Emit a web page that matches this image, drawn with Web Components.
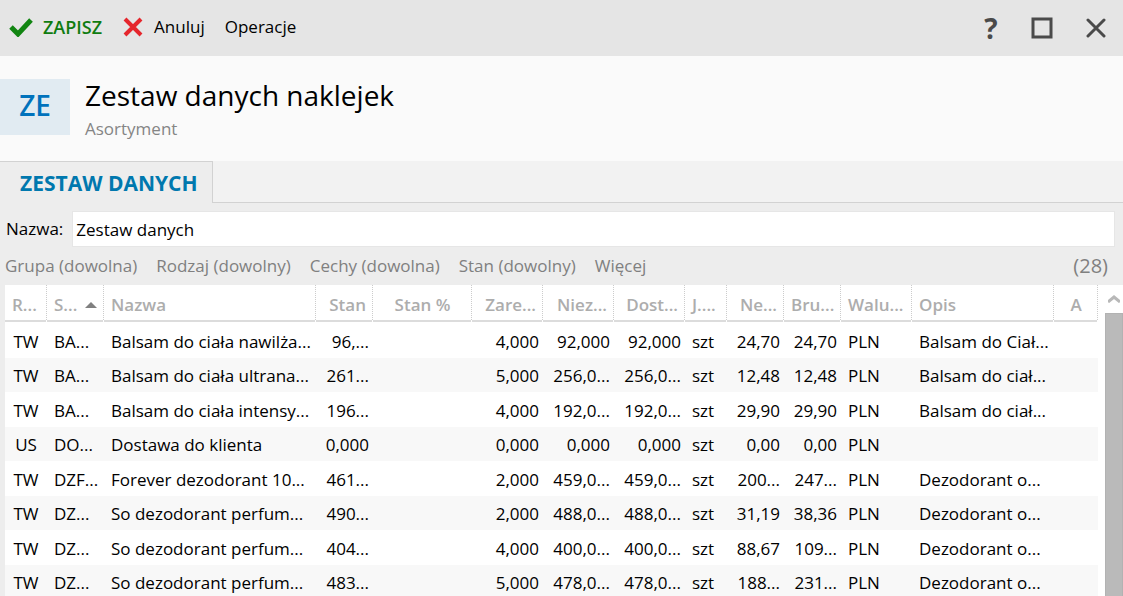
<!DOCTYPE html>
<html lang="pl">
<head>
<meta charset="utf-8">
<title>Zestaw danych naklejek</title>
<style>
    body {
        margin: 0;
        font: 17px/24px "Open Sans", "Noto Sans", sans-serif;
        color: #000;
        background: #ededed;
        overflow: hidden;
    }
</style>
</head>
<body>
<label-set-window>
    <tool-bar></tool-bar>
    <record-header initials="ZE">
        Zestaw danych naklejek
        <span slot="kind">Asortyment</span>
    </record-header>
    <tab-strip>Zestaw danych</tab-strip>
    <name-field value="Zestaw danych">Nazwa:</name-field>
    <filter-bar count="28"></filter-bar>
    <product-grid></product-grid>
</label-set-window>

<script>
class LabelSetWindow extends HTMLElement {
    constructor() {
        super();
        this.attachShadow({ mode: "open" }).innerHTML = `
            <style>
                :host {
                    display: flex;
                    flex-direction: column;
                    height: 100vh;
                    overflow: hidden;
                }
            </style>
            <slot></slot>
        `;
    }
}

class ToolBar extends HTMLElement {
    constructor() {
        super();
        this.attachShadow({ mode: "open" }).innerHTML = `
            <style>
                :host {
                    display: flex;
                    align-items: center;
                    flex: none;
                    height: 56px;
                    padding: 0 17px 0 9px;
                    box-sizing: border-box;
                    background: #e5e5e5;
                }
                button {
                    display: flex;
                    align-items: center;
                    padding: 0;
                    border: 0;
                    background: none;
                    color: inherit;
                    font: inherit;
                }
                svg { display: block; }
                .actions { display: flex; gap: 20px; margin-bottom: 2px; }
                .actions button { gap: 10px; }
                .save { color: #107c10; font-size: 18px; font-weight: 600; }
                .window { display: flex; gap: 33px; margin-left: auto; color: #4a4a4a; }
                .help { width: 14px; justify-content: center; font-size: 28px; font-weight: 700; }
            </style>
            <div class="actions">
                <button class="save">
                    <svg width="24" height="20" viewBox="0 0 24 20"><path d="M2 10l7 7L22 3" fill="none" stroke="#128512" stroke-width="5"/></svg>
                    ZAPISZ
                </button>
                <button>
                    <svg width="22" height="20" viewBox="0 0 22 20"><path d="M3 2l16 16M19 2L3 18" fill="none" stroke="#e5262c" stroke-width="4"/></svg>
                    Anuluj
                </button>
                <button>Operacje</button>
            </div>
            <div class="window">
                <button class="help" aria-label="Pomoc">?</button>
                <button aria-label="Maksymalizuj">
                    <svg width="22" height="22" viewBox="0 0 22 22"><path d="M2 2h18v18H2z" fill="none" stroke="#4a4a4a" stroke-width="3"/></svg>
                </button>
                <button aria-label="Zamknij">
                    <svg width="20" height="20" viewBox="0 0 20 20"><path d="M2 2l16 16M18 2L2 18" fill="none" stroke="#4a4a4a" stroke-width="3" stroke-linecap="round"/></svg>
                </button>
            </div>
        `;
    }
}

class RecordHeader extends HTMLElement {
    constructor() {
        super();
        this.attachShadow({ mode: "open" }).innerHTML = `
            <style>
                :host {
                    display: flex;
                    align-items: flex-start;
                    flex: none;
                    gap: 15px;
                    padding: 23px 0 20px;
                    background: #fafafa;
                }
                .badge {
                    width: 70px;
                    height: 56px;
                    background: #e1ebf2;
                    color: #0072bc;
                    font-size: 28px;
                    font-weight: 600;
                    line-height: 52px;
                    text-align: center;
                }
                h1 { margin: 0; font-size: 28px; line-height: 32px; font-weight: 400; }
                .kind { margin-top: 6px; color: #858585; }
            </style>
            <div class="badge"></div>
            <div>
                <h1><slot></slot></h1>
                <div class="kind"><slot name="kind"></slot></div>
            </div>
        `;
        this.shadowRoot.querySelector(".badge").textContent = this.getAttribute("initials");
    }
}

class TabStrip extends HTMLElement {
    constructor() {
        super();
        this.attachShadow({ mode: "open" }).innerHTML = `
            <style>
                :host {
                    display: flex;
                    flex: none;
                    height: 42px;
                    background: #f2f2f2;
                }
                button {
                    padding: 0 14px 0 20px;
                    border: solid #d2d2d2;
                    border-width: 1px 1px 0 0;
                    background: #ededed;
                    color: #0078ae;
                    font: inherit;
                    font-size: 21px;
                    font-weight: 700;
                    text-transform: uppercase;
                }
                .rest { flex: 1; border-bottom: 1px solid #d2d2d2; }
            </style>
            <button><slot></slot></button>
            <div class="rest"></div>
        `;
    }
}

class NameField extends HTMLElement {
    constructor() {
        super();
        this.attachShadow({ mode: "open" }).innerHTML = `
            <style>
                :host {
                    display: flex;
                    flex: none;
                    align-items: center;
                    gap: 9px;
                    padding: 8px 8px 0 6px;
                }
                input {
                    flex: 1;
                    min-width: 0;
                    height: 36px;
                    box-sizing: border-box;
                    padding: 0 3px;
                    border: 1px solid #e6e6e6;
                    background: white;
                    color: inherit;
                    font: inherit;
                }
            </style>
            <label for="name"><slot></slot></label>
            <input id="name" type="text">
        `;
        this.shadowRoot.querySelector("input").value = this.getAttribute("value");
    }
}

class FilterBar extends HTMLElement {
    constructor() {
        super();
        let filters = ["Grupa (dowolna)", "Rodzaj (dowolny)", "Cechy (dowolna)", "Stan (dowolny)", "Więcej"];
        this.attachShadow({ mode: "open" }).innerHTML = `
            <style>
                :host {
                    display: flex;
                    flex: none;
                    align-items: center;
                    gap: 19px;
                    height: 38px;
                    padding: 0 15px 0 5px;
                    color: #808080;
                }
                button {
                    padding: 0;
                    border: 0;
                    background: none;
                    color: inherit;
                    font: inherit;
                }
                output { margin-left: auto; font-size: 20px; }
            </style>
            ${filters.map(name => `<button>${name}</button>`).join("")}
            <output>(${this.getAttribute("count")})</output>
        `;
    }
}

// [header, width, header alignment, cell alignment]; no width means the column stretches
const COLUMNS = [
    ["R...", 42, "left", "center"],
    ["S...", 57, "left", "left"],
    ["Nazwa", 0, "left", "left"],
    ["Stan", 57, "right", "right"],
    ["Stan %", 99, "center", "right"],
    ["Zare...", 71, "right", "right"],
    ["Niez...", 71, "right", "right"],
    ["Dost...", 71, "right", "right"],
    ["J....", 42, "left", "left"],
    ["Ne...", 57, "right", "right"],
    ["Bru...", 57, "right", "right"],
    ["Walu...", 71, "left", "left"],
    ["Opis", 142, "left", "left"],
    ["A", 44, "center", "left"],
];

const ROWS = [
    ["TW", "BA...", "Balsam do ciała nawilża...", "96,...", "", "4,000", "92,000", "92,000", "szt", "24,70", "24,70", "PLN", "Balsam do Ciał...", ""],
    ["TW", "BA...", "Balsam do ciała ultrana...", "261...", "", "5,000", "256,0...", "256,0...", "szt", "12,48", "12,48", "PLN", "Balsam do ciał...", ""],
    ["TW", "BA...", "Balsam do ciała intensy...", "196...", "", "4,000", "192,0...", "192,0...", "szt", "29,90", "29,90", "PLN", "Balsam do ciał...", ""],
    ["US", "DO...", "Dostawa do klienta", "0,000", "", "0,000", "0,000", "0,000", "szt", "0,00", "0,00", "PLN", "", ""],
    ["TW", "DZF...", "Forever dezodorant 10...", "461...", "", "2,000", "459,0...", "459,0...", "szt", "200...", "247...", "PLN", "Dezodorant o...", ""],
    ["TW", "DZ...", "So dezodorant perfum...", "490...", "", "2,000", "488,0...", "488,0...", "szt", "31,19", "38,36", "PLN", "Dezodorant o...", ""],
    ["TW", "DZ...", "So dezodorant perfum...", "404...", "", "4,000", "400,0...", "400,0...", "szt", "88,67", "109...", "PLN", "Dezodorant o...", ""],
    ["TW", "DZ...", "So dezodorant perfum...", "483...", "", "5,000", "478,0...", "478,0...", "szt", "188...", "231...", "PLN", "Dezodorant o...", ""],
];

class ProductGrid extends HTMLElement {
    constructor() {
        super();
        this.attachShadow({ mode: "open" }).innerHTML = `
            <style>
                :host {
                    display: flex;
                    flex: 1;
                    gap: 7px;
                    min-height: 0;
                    margin-left: 5px;
                    background: white;
                    overflow: hidden;
                }
                .view { flex: 1; min-width: 0; overflow: hidden; }
                table {
                    width: 100%;
                    table-layout: fixed;
                    border-collapse: separate;
                    border-spacing: 0;
                }
                th, td { padding: 0; white-space: nowrap; }
                th {
                    height: 38px;
                    color: #adadad;
                    font-weight: 600;
                }
                th div {
                    height: 35px;
                    padding: 0 6px 0 7px;
                    border-right: 1px dotted #ccc;
                    line-height: 40px;
                }
                th::after {
                    content: "";
                    display: block;
                    height: 2px;
                    margin: 0 1px 1px 0;
                    background: #dcdcdc;
                }
                th svg { margin-left: 3px; vertical-align: 3px; }
                td { height: 34px; padding: 2px 4px 0 7px; box-sizing: border-box; }
                td.center { padding: 2px 0 0; }
                tr:nth-child(odd) td { height: 35px; }
                tr:nth-child(even) td { background: #f8f8f8; }
                .left { text-align: left; }
                .center { text-align: center; }
                .right { text-align: right; }
            </style>
            <div class="view">
                <table>
                    <colgroup>${COLUMNS.map(c => c[1] ? `<col style="width: ${c[1]}px">` : "<col>").join("")}</colgroup>
                    <thead><tr>${COLUMNS.map((c, i) => this.headerCell(c, i)).join("")}</tr></thead>
                    <tbody>${ROWS.map(row => this.row(row)).join("")}</tbody>
                </table>
            </div>
            <grid-scroll></grid-scroll>
        `;
    }

    headerCell([title, width, align], index) {
        let arrow = index == 1 ? ` <svg width="12" height="6" viewBox="0 0 12 6"><path d="M0 6l6-6 6 6z" fill="#808080"/></svg>` : "";
        return `<th class="${align}"><div>${title}${arrow}</div></th>`;
    }

    row(cells) {
        return `<tr>${cells.map((text, i) => `<td class="${COLUMNS[i][3]}">${text}</td>`).join("")}</tr>`;
    }
}

class GridScroll extends HTMLElement {
    constructor() {
        super();
        this.attachShadow({ mode: "open" }).innerHTML = `
            <style>
                :host { display: flex; flex-direction: column; width: 18px; }
                button {
                    display: grid;
                    place-items: center;
                    height: 28px;
                    padding: 0;
                    border: 0;
                    background: none;
                }
                .thumb {
                    flex: 1;
                    border: solid #b2b2b2;
                    border-width: 1px 1px 0 1px;
                    background: #bababa;
                }
            </style>
            <button aria-label="W górę">
                <svg width="12" height="8" viewBox="0 0 12 8"><path d="M0 7l6-5 6 5" fill="none" stroke="#b8b8b8" stroke-width="3"/></svg>
            </button>
            <div class="thumb"></div>
        `;
    }
}

customElements.define("label-set-window", LabelSetWindow);
customElements.define("tool-bar", ToolBar);
customElements.define("record-header", RecordHeader);
customElements.define("tab-strip", TabStrip);
customElements.define("name-field", NameField);
customElements.define("filter-bar", FilterBar);
customElements.define("grid-scroll", GridScroll);
customElements.define("product-grid", ProductGrid);
</script>
</body>
</html>
